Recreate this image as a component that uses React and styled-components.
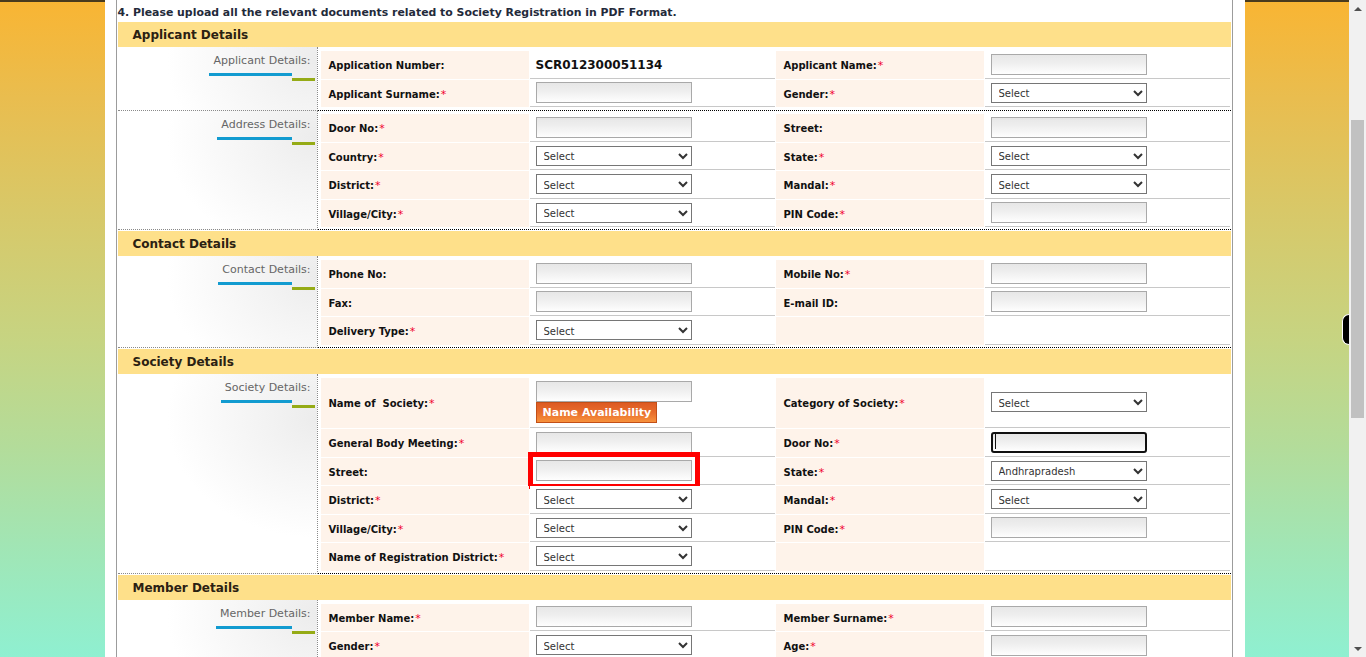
import React from 'react';
import styled, { createGlobalStyle } from 'styled-components';

const GlobalStyle = createGlobalStyle`
  html, body {
    margin: 0;
    padding: 0;
    overflow: hidden;
  }
  body {
    font-family: 'DejaVu Sans', Verdana, sans-serif;
  }
`;

const sections = [
  {
    title: 'Applicant Details',
    groups: [
      {
        name: 'Applicant Details:',
        bottom: 3,
        rows: [
          [{ label: 'Application Number:' }, { text: 'SCR012300051134' }, { label: 'Applicant Name:', req: true }, { kind: 'input' }],
          [{ label: 'Applicant Surname:', req: true }, { kind: 'input' }, { label: 'Gender:', req: true }, { kind: 'select' }],
        ],
      },
      {
        name: 'Address Details:',
        rows: [
          [{ label: 'Door No:', req: true }, { kind: 'input' }, { label: 'Street:' }, { kind: 'input' }],
          [{ label: 'Country:', req: true }, { kind: 'select' }, { label: 'State:', req: true }, { kind: 'select' }],
          [{ label: 'District:', req: true }, { kind: 'select' }, { label: 'Mandal:', req: true }, { kind: 'select' }],
          [{ label: 'Village/City:', req: true }, { kind: 'select' }, { label: 'PIN Code:', req: true }, { kind: 'input' }],
        ],
      },
    ],
  },
  {
    title: 'Contact Details',
    groups: [
      {
        name: 'Contact Details:',
        rows: [
          [{ label: 'Phone No:' }, { kind: 'input' }, { label: 'Mobile No:', req: true }, { kind: 'input' }],
          [{ label: 'Fax:' }, { kind: 'input' }, { label: 'E-mail ID:' }, { kind: 'input' }],
          [{ label: 'Delivery Type:', req: true }, { kind: 'select' }, { label: '' }, { kind: 'empty' }],
        ],
      },
    ],
  },
  {
    title: 'Society Details',
    groups: [
      {
        name: 'Society Details:',
        rows: [
          [{ label: 'Name of\u00a0 Society:', req: true }, { kind: 'nameCheck' }, { label: 'Category of Society:', req: true }, { kind: 'select' }],
          [{ label: 'General Body Meeting:', req: true }, { kind: 'input' }, { label: 'Door No:', req: true }, { kind: 'focus' }],
          [{ label: 'Street:' }, { kind: 'highlight' }, { label: 'State:', req: true }, { kind: 'select', option: 'Andhrapradesh' }],
          [{ label: 'District:', req: true }, { kind: 'select' }, { label: 'Mandal:', req: true }, { kind: 'select' }],
          [{ label: 'Village/City:', req: true }, { kind: 'select' }, { label: 'PIN Code:', req: true }, { kind: 'input' }],
          [{ label: 'Name of Registration District:', req: true }, { kind: 'select' }, { label: '' }, { kind: 'empty' }],
        ],
      },
    ],
  },
  {
    title: 'Member Details',
    groups: [
      {
        name: 'Member Details:',
        rows: [
          [{ label: 'Member Name:', req: true }, { kind: 'input' }, { label: 'Member Surname:', req: true }, { kind: 'input' }],
          [{ label: 'Gender:', req: true }, { kind: 'select' }, { label: 'Age:', req: true }, { kind: 'input' }],
        ],
      },
    ],
  },
];

const renderValue = (cell) => {
  switch (cell.kind) {
    case 'input':
      return <TextBox type="text" />;
    case 'select':
      return (
        <DropDown defaultValue={cell.option || 'Select'}>
          <option>{cell.option || 'Select'}</option>
        </DropDown>
      );
    case 'nameCheck':
      return (
        <Stack>
          <TextBox type="text" />
          <OrangeButton type="button">Name Availability</OrangeButton>
        </Stack>
      );
    case 'focus':
      return (
        <Caret>
          <TextBox type="text" $focused />
        </Caret>
      );
    case 'highlight':
      return <TextBox type="text" $marked />;
    case 'empty':
      return null;
    default:
      return <Strong>{cell.text}</Strong>;
  }
};

const App = () => {
  return (
    <>
      <GlobalStyle />
      <Page>
        <Backdrop>
          <Panel>
            <Frame>
              <Intro>4. Please upload all the relevant documents related to Society Registration in PDF Format.</Intro>
              {sections.map((section, si) => (
                <section key={section.title}>
                  <Header $first={si === 0}>{section.title}</Header>
                  {section.groups.map((group, gi) => (
                    <Group key={group.name}>
                      <Side>
                        <SideLabel>{group.name}</SideLabel>
                      </Side>
                      <Fields $top={gi === 0 ? 4 : 3} $bottom={group.bottom ?? 2}>
                        {group.rows.map((row, ri) =>
                          row.map((cell, ci) =>
                            ci % 2 === 0 ? (
                              <LabelCell key={`${ri}-${ci}`}>
                                {cell.label}
                                {cell.req && <Req>*</Req>}
                              </LabelCell>
                            ) : (
                              <ValueCell key={`${ri}-${ci}`}>{renderValue(cell)}</ValueCell>
                            )
                          )
                        )}
                      </Fields>
                    </Group>
                  ))}
                </section>
              ))}
            </Frame>
          </Panel>
          <SideTab />
        </Backdrop>
        <ScrollBar>
          <Arrow $up />
          <Track>
            <Thumb />
          </Track>
          <Arrow />
        </ScrollBar>
      </Page>
    </>
  );
};

export default App;

const Page = styled.div`
  display: flex;
  height: 657px;
  width: 1366px;
  overflow: hidden;
`;

const Backdrop = styled.div`
  position: relative;
  flex: 1;
  display: flex;
  justify-content: center;
  background:
    linear-gradient(#4a3b1d 0, #4a3b1d 2px, transparent 2px),
    linear-gradient(#f9b533 0%, #e9bd4f 15%, #d8c868 32%, #c6d482 52%, #b3dc9a 68%, #a0e6b6 84%, #8ff0d1 100%);
`;

const Panel = styled.div`
  width: 1140px;
  height: 100%;
  background: #ffffff;
  padding: 0 12px 0 11px;
  box-sizing: border-box;
  overflow: hidden;
`;

const Frame = styled.div`
  height: 100%;
  border-left: 1px solid #9c9c9c;
  border-right: 1px solid #9c9c9c;
  padding: 0 1px;
`;

const Intro = styled.div`
  height: 22px;
  box-sizing: border-box;
  padding: 4px 0 0 0;
  line-height: 18px;
  font-size: 10.9px;
  font-weight: bold;
  color: #232a3a;
  white-space: nowrap;
`;

const Header = styled.div`
  height: 25px;
  box-sizing: border-box;
  line-height: 25px;
  padding: 1px 0 0 15px;
  margin-top: ${(p) => (p.$first ? 0 : 1)}px;
  background: #fee08a;
  font-size: 12px;
  font-weight: bold;
  color: #2b2112;
`;

const Group = styled.div`
  display: flex;
`;

const Side = styled.div`
  width: 200px;
  box-sizing: border-box;
  flex-shrink: 0;
  padding: 2px 6px 0 0;
  text-align: right;
  border-right: 1px dotted #8a8a8a;
  border-bottom: 1px dotted #8a8a8a;
  background: radial-gradient(ellipse 150px 120px at 100% 22%, #ececec 0%, #f3f3f3 35%, #ffffff 100%);
`;

const SideLabel = styled.span`
  position: relative;
  display: inline-block;
  font-size: 11px;
  line-height: 13px;
  color: #666666;

  &::after {
    content: '';
    position: absolute;
    left: -4px;
    right: 19px;
    top: calc(100% + 6px);
    height: 3px;
    background: #129bd0;
  }
  &::before {
    content: '';
    position: absolute;
    right: -4px;
    width: 23px;
    top: calc(100% + 11px);
    height: 3px;
    background: #95ab16;
  }
`;

const Fields = styled.div`
  flex: 1;
  display: grid;
  grid-template-columns: 208px 245px 208px 245px;
  grid-auto-rows: minmax(27.5px, auto);
  gap: 1px;
  padding: ${(p) => p.$top}px 0 ${(p) => p.$bottom}px 3px;
  border-bottom: 1px dotted #000000;
`;

const LabelCell = styled.div`
  display: flex;
  align-items: center;
  padding: 2px 0 0 8px;
  background: #fef3ea;
  font-size: 10px;
  font-weight: bold;
  color: #111111;
  white-space: nowrap;
`;

const Req = styled.span`
  color: #f0002c;
  font-weight: normal;
  font-size: 11px;
  margin-left: 1px;
`;

const ValueCell = styled.div`
  display: flex;
  align-items: center;
  padding-left: 6px;
  background: #ffffff;
  border-bottom: 1px solid #c8c8c8;
`;

const Strong = styled.span`
  margin-top: 2px;
  font-size: 12px;
  font-weight: bold;
  color: #111111;
`;

const TextBox = styled.input`
  width: 156px;
  height: 21px;
  box-sizing: border-box;
  margin: 0;
  padding: 0 4px;
  border: ${(p) => (p.$focused ? '2px solid #111111' : '1px solid #a9a9a9')};
  border-radius: ${(p) => (p.$focused ? '3px' : '0')};
  background: linear-gradient(#e7e7e7 0%, #eeeeee 40%, #fefefe 100%);
  font-family: 'DejaVu Sans', sans-serif;
  font-size: 10px;
  outline: ${(p) => (p.$marked ? '5px solid #ff0000' : 'none')};
  outline-offset: 3px;
`;

const Caret = styled.span`
  position: relative;
  display: inline-block;

  &::after {
    content: '';
    position: absolute;
    left: 4px;
    top: 3px;
    width: 1px;
    height: 15px;
    background: #111111;
  }
`;

const DropDown = styled.select`
  width: 156px;
  height: 20px;
  box-sizing: border-box;
  margin: 0;
  padding: 2px 0 0 3px;
  border: 1px solid #767676;
  border-radius: 0;
  background: #ffffff;
  font-family: 'DejaVu Sans', sans-serif;
  font-size: 10px;
  color: #333333;
`;

const Stack = styled.div`
  display: flex;
  flex-direction: column;
  align-items: flex-start;
  padding: 3px 0 4.5px;
`;

const OrangeButton = styled.button`
  height: 21px;
  margin: 0;
  padding: 0 5px 0 6px;
  border: 1px solid #c24f17;
  background: linear-gradient(#dd5a22 0%, #e86d2c 50%, #f7923c 100%);
  color: #ffffff;
  font-family: 'DejaVu Sans', sans-serif;
  font-size: 11px;
  font-weight: bold;
`;

const SideTab = styled.div`
  position: absolute;
  right: 0;
  top: 314px;
  width: 6px;
  height: 29px;
  background: #000000;
  border: 1px solid #ffffff;
  border-right: none;
  border-radius: 8px 0 0 8px;
`;

const ScrollBar = styled.div`
  width: 17px;
  flex-shrink: 0;
  display: flex;
  flex-direction: column;
  background: #f1f1f1;
`;

const Arrow = styled.div`
  height: 17px;
  display: flex;
  align-items: center;
  justify-content: center;

  &::before {
    content: '';
    width: 0;
    height: 0;
    border-left: 4px solid transparent;
    border-right: 4px solid transparent;
    ${(p) => (p.$up ? 'border-bottom: 4px solid #505050;' : 'border-top: 4px solid #505050;')}
  }
`;

const Track = styled.div`
  flex: 1;
  padding: 103px 2px 0;
`;

const Thumb = styled.div`
  height: 298px;
  background: #c1c1c1;
`;
